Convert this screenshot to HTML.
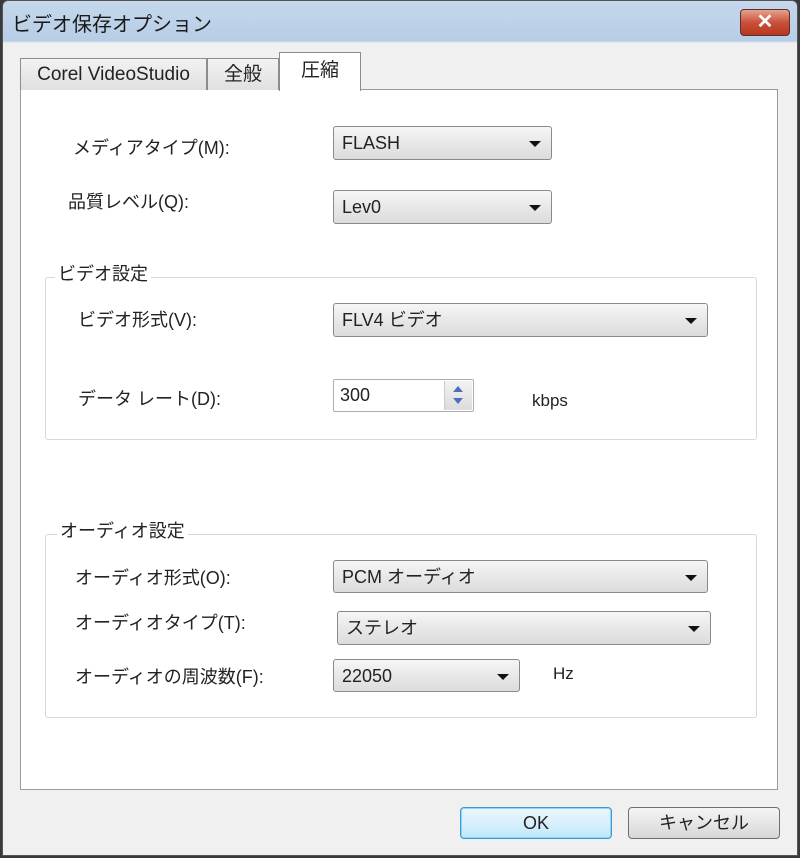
<!DOCTYPE html>
<html><head><meta charset="utf-8"><style>
*{box-sizing:border-box;margin:0;padding:0}
body{width:800px;height:858px;overflow:hidden;background:#3a3a3a;font-family:"Liberation Sans","Noto Sans CJK JP",sans-serif;color:#222;font-size:18px}
.win{position:absolute;left:2px;top:0;width:796px;height:856px;background:linear-gradient(#c5d8ec,#b7cde6 40px,#f0f0f0 42px);border:1px solid #555;border-radius:6px 6px 0 0}
.a{position:absolute;white-space:nowrap}
.panel{position:absolute;left:20px;top:89px;width:758px;height:701px;background:#fff;border:1px solid #9a9a9a}
.tab{position:absolute;background:linear-gradient(#f2f2f2,#e0e0e0);border:1px solid #8c8c8c;border-bottom:none;text-align:center;font-size:19px}
.combo{position:absolute;border:1px solid #8a8a8a;border-radius:3px;background:linear-gradient(#f6f6f6,#e8e8e8 50%,#dcdcdc);padding-left:8px;line-height:32px;font-size:18px}
.combo:after{content:"";position:absolute;right:10px;top:14px;border-left:6px solid transparent;border-right:6px solid transparent;border-top:6px solid #111}
.grp{position:absolute;border:1px solid #d8d8d8;border-radius:3px}
.lbl{position:absolute;background:#fff;padding:0 3px;font-size:18px}
.btn{position:absolute;border:1px solid #707070;border-radius:4px;background:linear-gradient(#f4f4f4,#e6e6e6 50%,#d6d6d6);text-align:center;line-height:30px;font-size:18px}
</style></head><body>
<div class="win"></div>
<div class="a" style="left:12px;top:8px;font-size:20px;color:#1a1a1a">ビデオ保存オプション</div>
<div class="a" style="left:740px;top:9px;width:50px;height:27px;border:1px solid #5a3030;border-radius:4px;background:linear-gradient(#e7a290,#c9503a 50%,#b8361f);color:#fff;font-weight:bold;text-align:center;line-height:24px;font-size:20px">✕</div>
<div class="panel"></div>
<div class="tab" style="left:20px;top:58px;width:187px;height:32px;line-height:32px">Corel VideoStudio</div>
<div class="tab" style="left:207px;top:58px;width:72px;height:32px;line-height:32px">全般</div>
<div class="tab" style="left:279px;top:52px;width:82px;height:39px;line-height:36px;background:#fff">圧縮</div>

<div class="a" style="left:73px;top:134px">メディアタイプ(M):</div>
<div class="combo" style="left:333px;top:126px;width:219px;height:34px">FLASH</div>
<div class="a" style="left:68px;top:188px">品質レベル(Q):</div>
<div class="combo" style="left:333px;top:190px;width:219px;height:34px">Lev0</div>

<div class="grp" style="left:45px;top:277px;width:712px;height:163px"></div>
<div class="lbl" style="left:55px;top:260px">ビデオ設定</div>
<div class="a" style="left:78px;top:306px">ビデオ形式(V):</div>
<div class="combo" style="left:333px;top:303px;width:375px;height:34px">FLV4 ビデオ</div>
<div class="a" style="left:78px;top:385px">データ レート(D):</div>
<div class="a" style="left:333px;top:379px;width:141px;height:33px;border:1px solid #abadb3;border-radius:2px;padding-left:6px;line-height:31px">300</div>
<div class="a" style="left:444px;top:381px;width:28px;height:29px;background:linear-gradient(#f2f2f2,#dcdcdc);border-left:1px solid #ccc"><div class="a" style="left:8px;top:5px;border-left:5px solid transparent;border-right:5px solid transparent;border-bottom:6px solid #4d6fc0"></div><div class="a" style="left:8px;top:17px;border-left:5px solid transparent;border-right:5px solid transparent;border-top:6px solid #4d6fc0"></div></div>
<div class="a" style="left:532px;top:391px;font-size:17px">kbps</div>

<div class="grp" style="left:45px;top:534px;width:712px;height:184px"></div>
<div class="lbl" style="left:57px;top:517px">オーディオ設定</div>
<div class="a" style="left:75px;top:564px">オーディオ形式(O):</div>
<div class="combo" style="left:333px;top:560px;width:375px;height:33px">PCM オーディオ</div>
<div class="a" style="left:75px;top:609px">オーディオタイプ(T):</div>
<div class="combo" style="left:337px;top:611px;width:374px;height:34px">ステレオ</div>
<div class="a" style="left:75px;top:663px">オーディオの周波数(F):</div>
<div class="combo" style="left:333px;top:659px;width:187px;height:33px">22050</div>
<div class="a" style="left:553px;top:664px;font-size:17px">Hz</div>

<div class="btn" style="left:460px;top:807px;width:152px;height:32px;border-color:#3c9bd0;background:linear-gradient(#eaf6fd,#d9f0fc 50%,#bee6fd);box-shadow:inset 0 0 0 1px #8fd3f5">OK</div>
<div class="btn" style="left:628px;top:807px;width:152px;height:32px">キャンセル</div>
</body></html>
